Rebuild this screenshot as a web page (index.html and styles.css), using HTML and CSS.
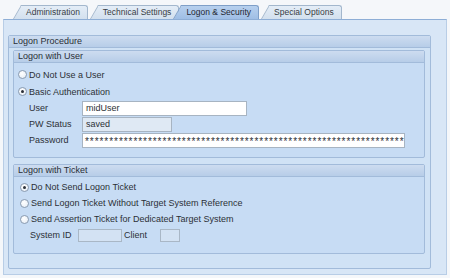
FILE: index.html
```html
<!DOCTYPE html>
<html lang="en">
<head>
    <meta charset="UTF-8">
    <title>Logon &amp; Security</title>
    <link rel="stylesheet" href="styles.css">
</head>
<body>
    <div class="tabs">
        <div class="tab">Administration</div>
        <div class="tab">Technical Settings</div>
        <div class="tab active">Logon &amp; Security</div>
        <div class="tab">Special Options</div>
    </div>
    <div class="panel">
        <div class="group outer">
            <div class="group-head">Logon Procedure</div>
            <div class="outer-body">
                <div class="group">
                    <div class="group-head">Logon with User</div>
                    <div class="group-body user-body">
                        <div class="radio-row"><span class="radio"></span>Do Not Use a User</div>
                        <div class="radio-row"><span class="radio checked"></span>Basic Authentication</div>
                        <div class="field-row">
                            <label>User</label>
                            <span class="input user-input">midUser</span>
                        </div>
                        <div class="field-row">
                            <label>PW Status</label>
                            <span class="input readonly pw-status">saved</span>
                        </div>
                        <div class="field-row">
                            <label>Password</label>
                            <span class="input password">******************************************************************</span>
                        </div>
                    </div>
                </div>
                <div class="group ticket">
                    <div class="group-head">Logon with Ticket</div>
                    <div class="group-body ticket-body">
                        <div class="radio-row"><span class="radio checked"></span>Do Not Send Logon Ticket</div>
                        <div class="radio-row"><span class="radio"></span>Send Logon Ticket Without Target System Reference</div>
                        <div class="radio-row"><span class="radio"></span>Send Assertion Ticket for Dedicated Target System</div>
                        <div class="sys-row">
                            <label>System ID</label>
                            <span class="input disabled sys-id"></span>
                            <label class="client-label">Client</label>
                            <span class="input disabled client"></span>
                        </div>
                    </div>
                </div>
            </div>
        </div>
    </div>
</body>
</html>
```
FILE: styles.css
```css
* {
    margin: 0;
    padding: 0;
    box-sizing: border-box;
}
body {
    width: 450px;
    height: 278px;
    background-color: #f5f7fa;
    font-family: "Liberation Sans", Arial, sans-serif;
    font-size: 9px;
    color: #2c3036;
    overflow: hidden;
}

/* tab strip */
.tabs {
    display: flex;
    height: 19px;
    padding: 5px 0 0 13px;
}
.tab {
    position: relative;
    z-index: 0;
    height: 14px;
    line-height: 14px;
    padding: 0 8px 0 13px;
    margin-right: 2px;
    font-size: 8.5px;
    color: #383d44;
}
.tab::before,
.tab::after {
    content: "";
    position: absolute;
    z-index: -1;
    top: 0;
    bottom: 0;
    background: linear-gradient(#e4edf7, #d3e0ee);
    border-top: 1px solid #a3b7cd;
}
.tab::before {
    left: 0;
    width: 12px;
    border-left: 1px solid #a3b7cd;
    transform: skewX(-30deg);
    transform-origin: bottom left;
}
.tab::after {
    left: 8px;
    right: 0;
    border-right: 1px solid #a3b7cd;
    border-top-right-radius: 3px;
}
.tab.active {
    z-index: 1;
    margin-left: -8px;
    color: #1f2630;
}
.tab.active::before,
.tab.active::after {
    background: linear-gradient(#b7d0ee, #9fbee5);
    border-color: #7f9fc8;
}

/* main panel */
.panel {
    height: 256px;
    margin: 0 3px 0 3px;
    padding: 15px 15px 7px 4px;
    background-color: #d8e6f6;
    border: 1px solid #b8cde6;
    border-top: 1px solid #8eaed6;
}
.group {
    border: 1px solid #a2bbda;
    border-radius: 2px;
    background-color: #c7dcf4;
}
.group.outer {
    background-color: #d0e2f5;
}
.group-head {
    height: 12px;
    line-height: 11px;
    padding-left: 4px;
    background: linear-gradient(#cddcf0, #b7cde8);
    border-bottom: 1px solid #a2bbda;
    color: #2a2f36;
}
.outer-body {
    padding: 2px 5px 14px 4px;
}
.ticket {
    margin-top: 6px;
}
.group-body {
    padding: 3px 0 9px 4px;
}
.ticket-body {
    padding: 2px 0 10px 6px;
}

/* rows */
.radio-row {
    display: flex;
    align-items: center;
    height: 17px;
}
.ticket-body .radio-row {
    height: 16px;
}
.radio {
    position: relative;
    width: 9px;
    height: 9px;
    margin-right: 2px;
    border: 1px solid #8a9bb0;
    border-radius: 50%;
    background: radial-gradient(circle at 40% 35%, #ffffff, #e3ebf4);
}
.radio.checked::after {
    content: "";
    position: absolute;
    left: 2px;
    top: 2px;
    width: 3px;
    height: 3px;
    border-radius: 50%;
    background-color: #2b3038;
}
.field-row {
    display: flex;
    align-items: center;
    height: 16px;
    padding-left: 11px;
}
.field-row label {
    width: 53px;
}
.input {
    display: block;
    height: 15px;
    line-height: 13px;
    padding-left: 3px;
    border: 1px solid #a7b4c2;
    background-color: #fff;
    white-space: nowrap;
    overflow: hidden;
}
.user-input {
    width: 165px;
}
.pw-status {
    width: 90px;
}
.readonly {
    background-color: #dfe9f4;
}
.password {
    width: 323px;
    padding-left: 2px;
    font-size: 10px;
    line-height: 16px;
    letter-spacing: 0.95px;
}
.sys-row {
    display: flex;
    align-items: center;
    height: 16px;
    padding-left: 10px;
}
.sys-row label {
    width: 48px;
}
.sys-row .client-label {
    width: 38px;
    padding-left: 2px;
}
.disabled {
    height: 13px;
    background-color: #d3e2f3;
    border-color: #a9b7c6;
}
.sys-id {
    width: 44px;
}
.client {
    width: 20px;
}
```
